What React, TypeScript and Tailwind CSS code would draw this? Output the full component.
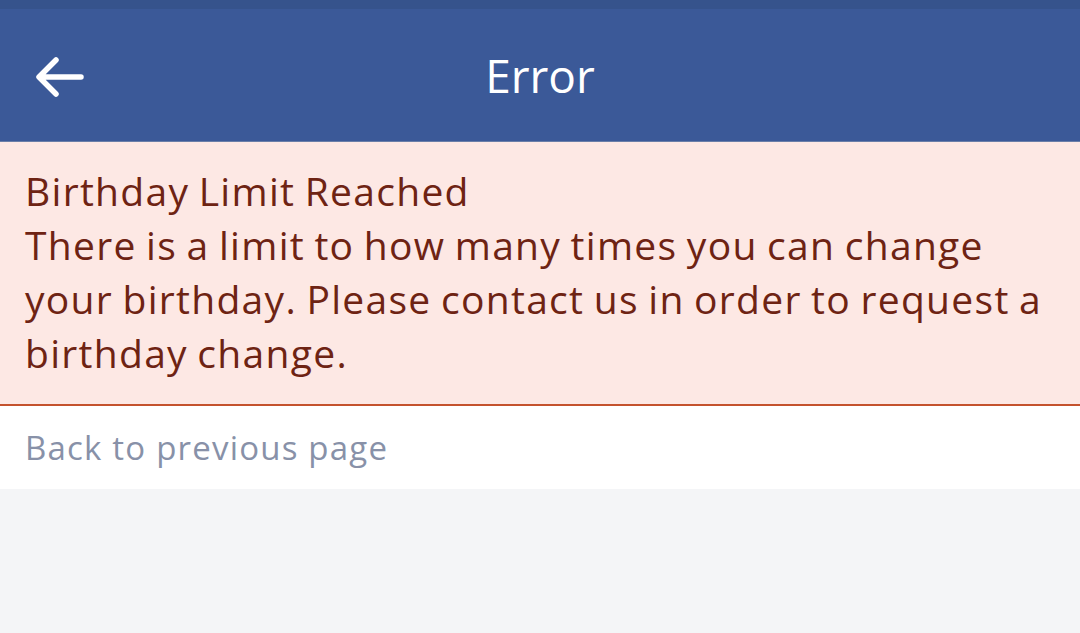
import { useState } from "react"

function BackArrow() {
    return (
        <svg width="50" height="44" viewBox="0 0 50 44" fill="none" className="block">
            <path
                d="M46 22H6M21 5L4 22l17 17"
                stroke="white"
                strokeWidth="5.5"
                strokeLinecap="round"
                strokeLinejoin="round"
            />
        </svg>
    )
}

export default function App() {
    const [pressed, setPressed] = useState(false)

    return (
        <div className="min-h-[633px] bg-[#f4f5f7] font-['Open_Sans',sans-serif]">
            {/* Header */}
            <div className="border-t-[9px] border-[#36538c] bg-[#3b5998] border-b border-b-[#6a7ea8]">
                <div className="relative flex h-[132px] items-center justify-center">
                    <button
                        onClick={() => setPressed(!pressed)}
                        className="absolute left-[35px] top-[46px]"
                    >
                        <BackArrow />
                    </button>
                    <h1 className="text-[46px] leading-none text-white">Error</h1>
                </div>
            </div>

            {/* Error box */}
            <div className="border-b-2 border-[#c4522d] bg-[#fde8e4] px-[25px] pt-[22px] pb-[24px] text-[39px] leading-[54px] tracking-[1.3px] [word-spacing:-2px] text-[#6e2313]">
                <p>Birthday Limit Reached</p>
                <p className="whitespace-nowrap">
                    There is a limit to how many times you can change
                    <br />
                    your birthday. Please contact us in order to request a
                    <br />
                    birthday change.
                </p>
            </div>

            {/* Back link */}
            <div className="bg-white px-[25px] h-[83px] flex items-center">
                <a className="text-[33px] tracking-[1.2px] text-[#8891a8]">
                    Back to previous page
                </a>
            </div>
        </div>
    )
}
